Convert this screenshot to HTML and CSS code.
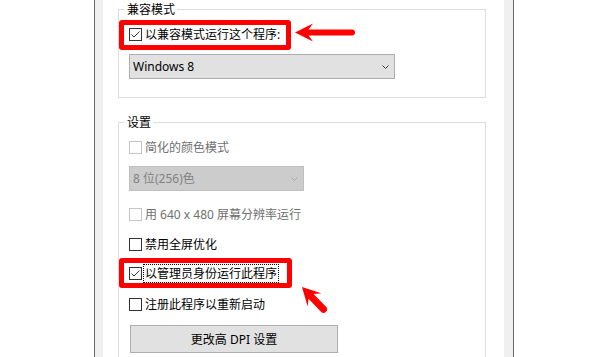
FILE: index.html
```html
<!DOCTYPE html>
<html lang="zh-CN">
<head>
<meta charset="utf-8">
<title>兼容性</title>
<link rel="stylesheet" href="styles.css">
</head>
<body>
<div class="window">
  <div class="panel">
    <fieldset class="group group-compat">
      <legend>兼容模式</legend>
      <div class="highlight">
        <div class="check-row">
          <span class="box"><svg class="tick" viewBox="0 0 11 11" width="11" height="11"><path d="M1.5 5.5 L4 8 L9.5 2.5" fill="none" stroke="#333" stroke-width="1"/></svg></span>
          <span class="label">以兼容模式运行这个程序:</span>
        </div>
      </div>
      <div class="select">
        <span class="select-text">Windows 8</span>
        <svg class="chevron" viewBox="0 0 7 4" width="7" height="4"><path d="M0.5 0.5 L3.5 3.5 L6.5 0.5" fill="none" stroke="#444" stroke-width="1"/></svg>
      </div>
    </fieldset>

    <fieldset class="group group-settings">
      <legend>设置</legend>
      <div class="check-row disabled row-first">
        <span class="box"></span>
        <span class="label">简化的颜色模式</span>
      </div>
      <div class="select select-disabled">
        <span class="select-text">8 位(256)色</span>
        <svg class="chevron" viewBox="0 0 7 4" width="7" height="4"><path d="M0.5 0.5 L3.5 3.5 L6.5 0.5" fill="none" stroke="#a6a6a6" stroke-width="1"/></svg>
      </div>
      <div class="check-row disabled row-gap">
        <span class="box"></span>
        <span class="label">用 640 x 480 屏幕分辨率运行</span>
      </div>
      <div class="check-row row-gap">
        <span class="box"></span>
        <span class="label">禁用全屏优化</span>
      </div>
      <div class="highlight highlight-admin">
        <div class="check-row">
          <span class="box"><svg class="tick" viewBox="0 0 11 11" width="11" height="11"><path d="M1.5 5.5 L4 8 L9.5 2.5" fill="none" stroke="#333" stroke-width="1"/></svg></span>
          <span class="label focus">以管理员身份运行此程序</span>
        </div>
      </div>
      <div class="check-row row-restart">
        <span class="box"></span>
        <span class="label">注册此程序以重新启动</span>
      </div>
      <div class="button">更改高 DPI 设置</div>
    </fieldset>
  </div>
</div>

<svg class="annotations" width="600" height="357" viewBox="0 0 600 357">
  <path d="M295 32.5 L313 23.5 L308.5 29.5 L352 29.5 A3 3 0 0 1 352 35.5 L308.5 35.5 L313 41.5 Z" fill="#ff0000"/>
  <g transform="translate(302 287) rotate(46)">
    <path d="M0 0 L18 -9.5 L13 -3.5 L31 -3.5 A3.5 3.5 0 0 1 31 3.5 L13 3.5 L18 9.5 Z" fill="#ff0000"/>
  </g>
</svg>
</body>
</html>
```

FILE: styles.css
```css
html, body {
  margin: 0;
  padding: 0;
}

body {
  position: relative;
  width: 600px;
  height: 357px;
  overflow: hidden;
  background: #ffffff;
  font-family: "Noto Sans", "Noto Sans CJK SC", "Microsoft YaHei", sans-serif;
  font-size: 12px;
  color: #000000;
}

.window {
  margin-left: 94px;
  width: 420px;
  height: 357px;
  box-sizing: border-box;
  border-left: 1px solid #6b6b6b;
  border-right: 1px solid #6b6b6b;
  background: #f0f0f0;
  padding: 0 9px 0 8px;
}

.panel {
  height: 100%;
  box-sizing: border-box;
  background: #ffffff;
  padding: 1px 0 0 15px;
  overflow: hidden;
}

.group {
  margin: 0;
  padding: 0;
  width: 368px;
  min-width: 0;
  box-sizing: border-box;
  border: 1px solid #dcdcdc;
}

.group legend {
  margin-left: 5px;
  padding: 0 2px 0 3px;
  line-height: 17px;
  height: 17px;
}

.group-compat {
  padding: 2px 0 18px 0;
}

.group-settings {
  margin-top: 16px;
  padding: 0 0 40px 0;
}

.highlight {
  width: 172px;
  height: 30px;
  box-sizing: border-box;
  border: 5px solid #ff0000;
  border-radius: 3px;
  padding: 0 0 1px 5px;
  display: flex;
  align-items: center;
}

.highlight-admin {
  width: 173px;
  margin-top: 7px;
  padding: 1px 0 0 5px;
}

.check-row {
  display: flex;
  align-items: center;
  height: 13px;
}

.group-settings > .check-row {
  margin-left: 10px;
}

.row-first {
  margin-top: 10px;
}

.row-gap {
  margin-top: 17px;
}

.row-restart {
  margin-top: 10px;
}

.box {
  flex: none;
  width: 13px;
  height: 13px;
  box-sizing: border-box;
  border: 1px solid #333333;
  background: #ffffff;
  display: flex;
}

.tick {
  display: block;
}

.label {
  margin-left: 3px;
  line-height: 17px;
  white-space: nowrap;
}

.label.focus {
  margin-left: 1px;
  padding: 0 1px;
  border: 1px dotted #000000;
}

.disabled .box {
  border-color: #c4c4c4;
}

.disabled .label {
  color: #707070;
}

.select {
  margin: 4px 0 0 10px;
  width: 266px;
  height: 25px;
  box-sizing: border-box;
  border: 1px solid #adadad;
  background: #e1e1e1;
  display: flex;
  align-items: center;
  justify-content: space-between;
  padding: 0 5px 0 3px;
}

.select-text {
  line-height: 17px;
}

.chevron {
  display: block;
}

.select-disabled {
  margin-top: 12px;
  width: 175px;
  border-color: #bfbfbf;
  background: #cccccc;
  color: #838383;
}

.button {
  margin: 14px 0 0 11px;
  width: 208px;
  height: 28px;
  box-sizing: border-box;
  border: 1px solid #adadad;
  background: #e1e1e1;
  display: flex;
  align-items: center;
  justify-content: center;
  line-height: 17px;
}

.annotations {
  position: absolute;
  left: 0;
  top: 0;
  pointer-events: none;
}
```
